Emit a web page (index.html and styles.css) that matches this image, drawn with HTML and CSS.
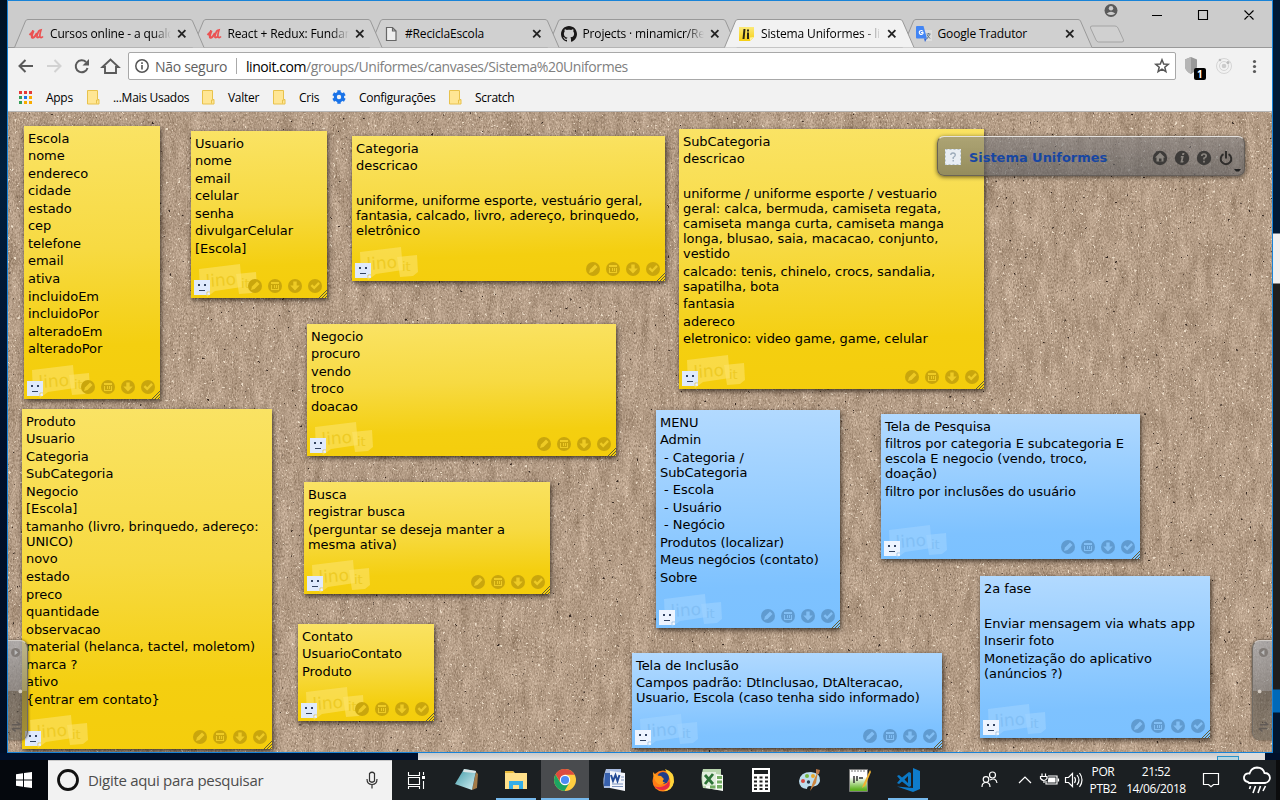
FILE: index.html
```html
<!DOCTYPE html>
<html lang="pt-BR">
<head>
<meta charset="utf-8">
<title>Sistema Uniformes - lino</title>
<link rel="stylesheet" href="styles.css">
</head>
<body>
<svg class="defs" width="0" height="0" aria-hidden="true">
  <defs>
    <symbol id="logo" viewBox="0 0 70 36">
      <path class="logo-paper" d="M8 7L49 2L51 25L24 29L16 35L14 30L9 30Z"/>
      <path class="logo-paper" d="M45 12L65 10L66 27L61 31L48 32Z"/>
      <text class="logo-word" x="15" y="25" transform="rotate(-4 15 25)">lino</text>
      <text class="logo-word logo-it" x="50" y="26">it</text>
      <rect class="face" x="3" y="18" width="16" height="15"/>
      <path class="face-fold" d="M16 33V30H19"/>
      <path class="face-line" d="M7 22h2v2h-2zM13 22h2v2h-2zM8 28h6v1h-6z"/>
    </symbol>
    <symbol id="tools" viewBox="0 0 81 24">
      <g class="tool-disc"><circle cx="9" cy="12" r="7"/><circle cx="29" cy="12" r="7"/><circle cx="49" cy="12" r="7"/><circle cx="69" cy="12" r="7"/></g>
      <g class="tool-mark">
        <path d="M5 16L6 12.500L11 7.500L13.500 10L8.500 15Z"/>
        <path d="M25 8h8v2h-8zM25 11h1v5h-1zM32 11h1v5h-1zM26 15h6v1h-6zM28 11h1v3h-1zM30 11h1v3h-1z"/>
        <path d="M47.300 7.500h3.400v4h3L49 16.500L44.300 11.500h3z"/>
        <path d="M64.500 12l1.700-1.700l2 2l4-4.200l1.700 1.700l-5.700 5.800z"/>
      </g>
      <path class="grip" d="M73 24L81 16M76 24L81 19M79 24L81 22"/>
    </symbol>
    <symbol id="tab" viewBox="0 0 192 29"><path d="M.5 28.500L11.500 2Q12.200.5 14 .5H176Q177.800.5 178.500 2L190 28.500"/></symbol>
    <symbol id="close" viewBox="0 0 10 10"><path d="M1.200 1.200L8.400 8.400M8.400 1.200L1.200 8.400" stroke="#222" stroke-width="1.800"/></symbol>
    <symbol id="udemy" viewBox="0 0 16 16"><path d="M1.500 9Q4 7 5.500 4.500Q3.500 9 4 11.300Q6 12.800 9 7" fill="none" stroke="#eb5252" stroke-width="2.200"/><path d="M11 4.500Q8.500 9.500 9 11.300Q10.200 12 11.500 10.500M11 4.500L13 4Q11.300 9.500 12.200 11.300Q13.500 12 15 10.500" fill="none" stroke="#eb5252" stroke-width="1.700"/></symbol>
    <symbol id="folder" viewBox="0 0 13 15"><path d="M.5.5h10v9h1.500v4.500h-11.500z" fill="#ffe694" stroke="#e8c24c"/><path d="M9.500 13.500v-3.500h2" fill="none" stroke="#e8c24c"/></symbol>
  </defs>
</svg>

<main class="screen">
  <div class="desk-row">
    <div class="edge edge-left"></div>
    <section class="window">
      <header class="titlebar">
        <div class="tabs">
          <div class="tab t1"><svg class="shape"><use href="#tab"/></svg><svg class="fav"><use href="#udemy"/></svg><span class="tab-text fade">Cursos online - a qualq</span><svg class="x"><use href="#close"/></svg></div>
          <div class="tab t2"><svg class="shape"><use href="#tab"/></svg><svg class="fav"><use href="#udemy"/></svg><span class="tab-text fade">React + Redux: Fundam</span><svg class="x"><use href="#close"/></svg></div>
          <div class="tab t3"><svg class="shape"><use href="#tab"/></svg><svg class="fav" viewBox="0 0 16 16"><path d="M3.500 1.500h6l3.500 3.500v9.500h-9.500zM9.500 1.500v3.500h3.500" fill="#eee" stroke="#666" stroke-width="1.200"/></svg><span class="tab-text">#ReciclaEscola</span><svg class="x"><use href="#close"/></svg></div>
          <div class="tab t4"><svg class="shape"><use href="#tab"/></svg><svg class="fav" viewBox="0 0 16 16"><path fill="#191717" d="M8 0C3.600 0 0 3.600 0 8c0 3.500 2.300 6.500 5.500 7.600.4.1.5-.2.5-.4v-1.400c-2.200.5-2.700-1-2.700-1-.4-.9-.9-1.200-.9-1.200-.7-.5.1-.5.1-.5.8.1 1.200.8 1.200.8.7 1.300 1.900.9 2.300.7.1-.5.300-.9.500-1.100-1.800-.2-3.600-.9-3.600-4 0-.9.300-1.600.8-2.100-.1-.2-.4-1 .1-2.100 0 0 .7-.2 2.200.8.6-.2 1.300-.3 2-.3s1.400.1 2 .3c1.500-1 2.200-.8 2.200-.8.4 1.100.2 1.900.1 2.100.5.600.8 1.300.8 2.100 0 3.100-1.900 3.700-3.700 3.900.3.400.6.900.6 1.700v2.200c0 .2.100.5.600.4C13.700 14.500 16 11.500 16 8c0-4.400-3.600-8-8-8z"/></svg><span class="tab-text fade">Projects · minamicr/Rec</span><svg class="x"><use href="#close"/></svg></div>
          <div class="tab t5 active"><svg class="shape"><use href="#tab"/></svg><svg class="fav" viewBox="0 0 16 16"><defs><linearGradient id="lg" x2="0" y2="1"><stop stop-color="#fbe978"/><stop offset="1" stop-color="#f6cf12"/></linearGradient></defs><path d="M1 1h15v10l-4 4h-11z" fill="url(#lg)"/><path d="M16 11l-4 4v-3.500z" fill="#fff3a0"/><path d="M6.500 3L5.500 13M10 6.500V13M10 3.500v2" stroke="#2b2814" stroke-width="2"/></svg><span class="tab-text fade">Sistema Uniformes - lino</span><svg class="x"><use href="#close"/></svg></div>
          <div class="tab t6"><svg class="shape"><use href="#tab"/></svg><svg class="fav" viewBox="0 0 16 16"><path d="M6 4h10v11h-6z" fill="#ddd"/><path d="M0 1Q0 0 1 0H7.500L11 12.500H1Q0 12.500 0 11.500Z" fill="#4285f4"/><path d="M8 12.500h3l-2 3.500z" fill="#3367d6"/><path d="M7 5.500A2 2 0 1 0 7 7.500V6.600H5" fill="none" stroke="#fff" stroke-width="1.100"/><path d="M10.500 8h4M12.500 7v1M13.800 8.500l-3 4.500M11 9l3 3.500" stroke="#667b88" fill="none"/></svg><span class="tab-text">Google Tradutor</span><svg class="x"><use href="#close"/></svg></div>
        </div>
        <svg class="newtab" viewBox="0 0 36 18"><path d="M3 1H26Q28 1 29 3L34.500 15Q35 17 33 17H9.500Q8 17 7 15L1.500 3Q1 1 3 1Z" fill="#d0d0d0" stroke="#a4a4a4"/></svg>
        <svg class="caption" viewBox="0 0 160 28">
          <circle cx="7" cy="8.500" r="6.500" fill="#5a5a5a"/><circle cx="7" cy="6.300" r="2.200" fill="#ccc"/><path d="M2.800 11.500Q7 8 11.200 11.500Q7 14.500 2.800 11.500" fill="#ccc"/>
          <path d="M48 13.500h10M94.500 8.500h9v9h-9zM140.500 8.500l9 9M149.500 8.500l-9 9" fill="none" stroke="#000" stroke-width="1.100"/>
        </svg>
      </header>

      <div class="navbar">
        <svg class="nav-icons" viewBox="0 0 112 24" fill="none" stroke="#5a5a5a" stroke-width="2">
          <path d="M13.500 6L7.500 12L13.500 18M8 12h13"/>
          <path d="M42.500 6L48.500 12L42.500 18M35 12h13" stroke="#d2d2d2"/>
          <path d="M74 8A6 6 0 1 0 75.500 14"/><path d="M77 5v6.500h-6.500z" fill="#5a5a5a" stroke="none"/>
          <path d="M90.500 13L98.500 5.500L106.500 13H104V19H93V13Z" stroke-width="1.900"/>
        </svg>
        <div class="omnibox">
          <svg class="info" viewBox="0 0 16 16"><circle cx="8" cy="8" r="6.200" fill="none" stroke="#555" stroke-width="1.500"/><path d="M8 7v4.500M8 4.300v1.700" stroke="#555" stroke-width="1.600"/></svg>
          <span class="secure">Não seguro</span><i class="bar"></i>
          <span class="url"><b>linoit.com</b>/groups/Uniformes/canvases/Sistema%20Uniformes</span>
          <svg class="star" viewBox="0 0 16 16"><path d="M8 1.800L9.700 6L14.200 6.300L10.800 9.200L11.900 13.600L8 11.200L4.100 13.600L5.200 9.200L1.800 6.300L6.300 6Z" fill="none" stroke="#555" stroke-width="1.500"/></svg>
        </div>
        <svg class="ext" viewBox="0 0 96 28">
          <path d="M15 5L21 7.500V15Q20 19 15 22Q9.500 19 9 15V7.500Z" fill="#999"/><path d="M15 5V22Q9.500 19 9 15V7.500Z" fill="#b5b5b5"/>
          <rect x="18" y="16" width="12" height="12" rx="2" fill="#000"/><text x="21" y="25.500" class="badge">1</text>
          <g fill="none" stroke="#d5d5d5"><circle cx="48" cy="14" r="7.500"/><circle cx="48" cy="14" r="4.500"/></g><circle cx="48" cy="14" r="2.300" fill="#ccc"/><circle cx="52" cy="10.500" r="1.500" fill="#bbb"/><circle cx="44" cy="8" r="1.300" fill="#bbb"/>
          <g fill="#5a5a5a"><circle cx="78.500" cy="9.500" r="1.600"/><circle cx="78.500" cy="14.500" r="1.600"/><circle cx="78.500" cy="19.500" r="1.600"/></g>
        </svg>
      </div>

      <nav class="bookmarks">
        <svg class="apps" viewBox="0 0 13 13"><path fill="#e53935" d="M0 0h3v3h-3zM5 0h3v3h-3zM10 0h3v3h-3z"/><path fill="#34a05a" d="M0 5h3v3h-3zM0 10h3v3h-3z"/><path fill="#1a73e8" d="M5 5h3v3h-3z"/><path fill="#f9ab00" d="M10 5h3v3h-3zM5 10h3v3h-3zM10 10h3v3h-3z"/></svg>
        <span class="bm b1">Apps</span>
        <svg class="folder"><use href="#folder"/></svg><span class="bm b2">...Mais Usados</span>
        <svg class="folder"><use href="#folder"/></svg><span class="bm b3">Valter</span>
        <svg class="folder"><use href="#folder"/></svg><span class="bm b4">Cris</span>
        <svg class="gear" viewBox="0 0 14 14"><circle cx="7" cy="7" r="3.700" fill="none" stroke="#1a73e8" stroke-width="3"/><path d="M7 .3v2.700M7 11v2.700M1.200 3.700l2.300 1.300M10.500 9l2.300 1.300M1.200 10.300l2.300-1.300M10.500 5l2.300-1.300" stroke="#1a73e8" stroke-width="3.400"/></svg><span class="bm b5">Configurações</span>
        <svg class="folder"><use href="#folder"/></svg><span class="bm b6">Scratch</span>
      </nav>

      <div class="canvas">
        <svg class="board" width="1264" height="640">
          <filter id="fiber" x="0" y="0" width="100%" height="100%" color-interpolation-filters="sRGB">
            <feTurbulence type="fractalNoise" baseFrequency=".713 .417" numOctaves="2" seed="7" result="fine"/>
            <feTurbulence type="fractalNoise" baseFrequency=".117 .031" numOctaves="3" seed="12" result="broad"/>
            <feComposite in="fine" in2="broad" operator="arithmetic" k2=".68" k3=".32"/>
            <feColorMatrix values=".44 .3 0 0 .335  .44 .3 0 0 .243  .44 .3 0 0 .155  0 0 0 0 1"/>
          </filter>
          <filter id="light" x="0" y="0" width="100%" height="100%" color-interpolation-filters="sRGB">
            <feTurbulence type="fractalNoise" baseFrequency=".317" numOctaves="3" seed="21"/>
            <feColorMatrix values="0 0 0 0 .93  0 0 0 0 .87  0 0 0 0 .79  10 0 0 0 -7"/>
          </filter>
          <filter id="dark" x="0" y="0" width="100%" height="100%" color-interpolation-filters="sRGB">
            <feTurbulence type="fractalNoise" baseFrequency=".237" numOctaves="3" seed="44"/>
            <feColorMatrix values="0 0 0 0 .2  0 0 0 0 .15  0 0 0 0 .12  0 12 0 0 -9.400"/>
          </filter>
          <rect width="1264" height="640" filter="url(#fiber)"/>
          <rect width="1264" height="640" filter="url(#light)"/>
          <rect width="1264" height="640" filter="url(#dark)"/>
        </svg>

        <article class="note escola"><p>Escola</p><p>nome</p><p>endereco</p><p>cidade</p><p>estado</p><p>cep</p><p>telefone</p><p>email</p><p>ativa</p><p>incluidoEm</p><p>incluidoPor</p><p>alteradoEm</p><p>alteradoPor</p><footer><svg class="logo"><use href="#logo"/></svg><svg class="tools"><use href="#tools"/></svg></footer></article>
        <article class="note usuario"><p>Usuario</p><p>nome</p><p>email</p><p>celular</p><p>senha</p><p>divulgarCelular</p><p>[Escola]</p><footer><svg class="logo"><use href="#logo"/></svg><svg class="tools"><use href="#tools"/></svg></footer></article>
        <article class="note categoria"><p>Categoria</p><p>descricao</p><p>&nbsp;</p><p>uniforme, uniforme esporte, vestuário geral,<br>fantasia, calcado, livro, adereço, brinquedo,<br>eletrônico</p><footer><svg class="logo"><use href="#logo"/></svg><svg class="tools"><use href="#tools"/></svg></footer></article>
        <article class="note subcategoria"><p>SubCategoria</p><p>descricao</p><p>&nbsp;</p><p>uniforme / uniforme esporte / vestuario<br>geral: calca, bermuda, camiseta regata,<br>camiseta manga curta, camiseta manga<br>longa, blusao, saia, macacao, conjunto,<br>vestido</p><p>calcado: tenis, chinelo, crocs, sandalia,<br>sapatilha, bota</p><p>fantasia</p><p>adereco</p><p>eletronico: video game, game, celular</p><footer><svg class="logo"><use href="#logo"/></svg><svg class="tools"><use href="#tools"/></svg></footer></article>
        <article class="note negocio"><p>Negocio</p><p>procuro</p><p>vendo</p><p>troco</p><p>doacao</p><footer><svg class="logo"><use href="#logo"/></svg><svg class="tools"><use href="#tools"/></svg></footer></article>
        <article class="note produto"><p>Produto</p><p>Usuario</p><p>Categoria</p><p>SubCategoria</p><p>Negocio</p><p>[Escola]</p><p>tamanho (livro, brinquedo, adereço:<br>UNICO)</p><p>novo</p><p>estado</p><p>preco</p><p>quantidade</p><p>observacao</p><p>material (helanca, tactel, moletom)</p><p>marca ?</p><p>ativo</p><p>{entrar em contato}</p><footer><svg class="logo"><use href="#logo"/></svg><svg class="tools"><use href="#tools"/></svg></footer></article>
        <article class="note busca"><p>Busca</p><p>registrar busca</p><p>(perguntar se deseja manter a<br>mesma ativa)</p><footer><svg class="logo"><use href="#logo"/></svg><svg class="tools"><use href="#tools"/></svg></footer></article>
        <article class="note contato"><p>Contato</p><p>UsuarioContato</p><p>Produto</p><footer><svg class="logo"><use href="#logo"/></svg><svg class="tools"><use href="#tools"/></svg></footer></article>
        <article class="note blue menu"><p>MENU</p><p>Admin</p><p>&nbsp;- Categoria /<br>SubCategoria</p><p>&nbsp;- Escola</p><p>&nbsp;- Usuário</p><p>&nbsp;- Negócio</p><p>Produtos (localizar)</p><p>Meus negócios (contato)</p><p>Sobre</p><footer><svg class="logo"><use href="#logo"/></svg><svg class="tools"><use href="#tools"/></svg></footer></article>
        <article class="note blue pesquisa"><p>Tela de Pesquisa</p><p>filtros por categoria E subcategoria E<br>escola E negocio (vendo, troco,<br>doação)</p><p>filtro por inclusões do usuário</p><footer><svg class="logo"><use href="#logo"/></svg><svg class="tools"><use href="#tools"/></svg></footer></article>
        <article class="note blue fase"><p>2a fase</p><p>&nbsp;</p><p>Enviar mensagem via whats app</p><p>Inserir foto</p><p>Monetização do aplicativo<br>(anúncios ?)</p><footer><svg class="logo"><use href="#logo"/></svg><svg class="tools"><use href="#tools"/></svg></footer></article>
        <article class="note blue inclusao"><p>Tela de Inclusão</p><p>Campos padrão: DtInclusao, DtAlteracao,<br>Usuario, Escola (caso tenha sido informado)</p><footer><svg class="logo"><use href="#logo"/></svg><svg class="tools"><use href="#tools"/></svg></footer></article>

        <div class="panel">
          <svg class="panel-fav" viewBox="0 0 16 16"><rect width="16" height="16" fill="#e8edf2"/><rect x=".5" y=".5" width="15" height="15" fill="none" stroke="#b9c4cd" stroke-dasharray="2 2"/><path d="M5.800 6Q5.800 4 8 4T10.300 6Q10.300 7.300 8.200 8.500V10M8.200 11v1.500" fill="none" stroke="#9aa9b8" stroke-width="1.300"/></svg>
          <strong>Sistema Uniformes</strong>
          <svg class="panel-icons" viewBox="0 0 86 24">
            <g fill="#3d3b39"><circle cx="8" cy="12" r="7.200"/><circle cx="30" cy="12" r="7.200"/><circle cx="52" cy="12" r="7.200"/></g>
            <g fill="#8a857f"><path d="M8 6.500L13 11.500H11.500V15.500H4.500V11.500H3Z"/><path d="M7 12.500h2.500v3h-2.500z" fill="#3d3b39"/><path d="M30.500 7h2l-.5 2h-2zM29 10h2.800l-1.200 5h1l-.4 1.500h-2.800l1.200-5h-1z"/></g>
            <path d="M49.800 10Q49.800 8 52 8T54.200 10Q54.200 11 52 12.300V13.500M52 14.700v1.800" fill="none" stroke="#8a857f" stroke-width="1.700"/>
            <path d="M71.500 8.200A5.300 5.300 0 1 0 76.500 8.200M74 5v7.500" fill="none" stroke="#2f2d2b" stroke-width="2"/>
          </svg>
        </div>
        <svg class="caret" viewBox="0 0 7 4"><path d="M0 0h7L5 2.500H2z" fill="#222"/></svg>
        <svg class="drawer drawer-left" viewBox="0 0 20 100"><circle cx="8" cy="10" r="4.800" fill="#817b77"/><path d="M7 7l3.500 3-3.500 3z" fill="#bbb"/><circle cx="13" cy="51" r="2" fill="#d3cbc2"/><path d="M4 86h8M9 83l4 3M13 90h-8M8 93l-4-3" stroke="#625b56" stroke-width="1.500"/></svg>
        <svg class="drawer drawer-right" viewBox="0 0 20 100"><circle cx="11" cy="10" r="4.800" fill="#817b77"/><path d="M12 7l-3.500 3 3.500 3z" fill="#bbb"/><circle cx="7" cy="51" r="2" fill="#d3cbc2"/><path d="M7 86h8M12 83l4 3M15 90h-8M10 93l-4-3" stroke="#625b56" stroke-width="1.500"/></svg>
      </div>
    </section>
    <div class="edge edge-right"></div>
  </div>
  <div class="strip"><i class="strip-light"></i><i class="strip-box"></i><i class="strip-end"></i></div>

  <footer class="taskbar">
    <div class="start"><svg width="16" height="16" viewBox="0 0 16 16"><path fill="#fff" d="M0 2.200L7 1.200V7.500H0zM8 1L16 0V7.500H8zM0 8.500H7V14.800L0 13.800zM8 8.500H16V16L8 15z"/></svg></div>
    <div class="search"><svg width="24" height="24" viewBox="0 0 24 24"><circle cx="12" cy="12" r="9.500" fill="none" stroke="#111" stroke-width="2.800"/></svg><span>Digite aqui para pesquisar</span>
      <svg class="mic" width="14" height="18" viewBox="0 0 14 18"><path d="M4.500 2.500Q7 0 9.500 2.500V10Q7 12.500 4.500 10ZM2 8Q2 13.500 7 13.500T12 8M7 13.500V17.500" fill="none" stroke="#333" stroke-width="1.200"/></svg></div>
    <div class="task tv"><svg viewBox="0 0 24 24"><path d="M4.500 4v3.500h11V4M4.500 9.500h11v7h-11zM4.500 21v-2.500h11V21M19.500 4v3M19.500 13v8" fill="none" stroke="#fff" stroke-width="1.100"/><path d="M18 8h3v3h-3z" fill="#fff"/></svg></div>
    <div class="task notes"><svg viewBox="0 0 24 24"><defs><linearGradient id="ng" x2="1" y2="1"><stop stop-color="#3f9aa7"/><stop offset="1" stop-color="#d8f2f6"/></linearGradient></defs><path d="M21 4l2 2-1 14-5 2z" fill="#a37a47"/><path d="M9 1L21 3L17 22L0 16Z" fill="url(#ng)"/><path d="M9 1L21 3L20.500 5L8 4Z" fill="#dce5e6"/></svg></div>
    <div class="task explorer open"><svg viewBox="0 0 24 24"><path d="M1 3h8l2 2h12v16h-22z" fill="#ffe08a"/><path d="M1 3h8l1 2h-9z" fill="#e8b93a"/><path d="M5 21v-8h14v8h-4v-4h-6v4z" fill="#35aee8"/></svg></div>
    <div class="task chrome open"><svg viewBox="0 0 24 24"><circle cx="12" cy="12" r="11" fill="#ffcd40"/><path d="M2.500 6.500A11 11 0 0 1 21.600 6.800H12L7.500 14.500Z" fill="#dd4b3e"/><path d="M2.500 6.500A11 11 0 0 0 11.500 23L16.500 14.500H7.200Z" fill="#1da462"/><circle cx="12" cy="12" r="5.200" fill="#fff"/><circle cx="12" cy="12" r="4.100" fill="#4c8bf5"/></svg></div>
    <div class="task word"><svg viewBox="0 0 24 24"><path d="M4 1h15v19h-17q-2-9 2-19z" fill="#a9bce2"/><path d="M3 5h14v13h-15z" fill="#3760ad"/><path d="M8 3L23 5V23L8 20Z" fill="#f4f6fb"/><path d="M9 7l2 6 2.500-6 2 6L17.500 7" fill="none" stroke="#234b96" stroke-width="2"/><path d="M10 16h11M10 18.500h11M19 9h3M19 12h3" stroke="#7c93bf"/></svg></div>
    <div class="task firefox"><svg viewBox="0 0 24 24"><circle cx="12" cy="13" r="10.500" fill="#ff7b15"/><path d="M14 1Q24 4 23 14Q21 23 13 23Q21 18 19 11Z" fill="#ffd43a"/><path d="M3 18Q9 24 16 21Q20 18 18 13Q12 22 3 18" fill="#e72a45"/><circle cx="12" cy="10" r="6" fill="#203d89"/><path d="M2 4Q5 8 10 8L13 11Q10 14 14 14.500Q9 19 5 14Q2 10 2 4" fill="#ff9b1d"/></svg></div>
    <div class="task excel"><svg viewBox="0 0 24 24"><path d="M3 1h18v21L3 20Q0 10 3 1z" fill="#b8d5ad"/><path d="M7 5L23 7V23L6 20Z" fill="#f7fbf4"/><path d="M2 4h14v14h-13z" fill="#e1eedd"/><path d="M5 7L13 16M13 6L5 16" stroke="#2c7336" stroke-width="2.800"/><path d="M17 8h5v3h-5zM17 12.500h5v3h-5zM17 17h5v3.500h-5zM10 17.500h5.500v3h-5.500z" fill="#72ac61"/></svg></div>
    <div class="task calc"><svg viewBox="0 0 24 24"><path d="M3 0h18v24h-18z" fill="#fff"/><path d="M5 2h14v4h-14z" fill="#1c1f21"/><path d="M5 9.500h14M5 13.500h14M5 17.500h14M5 21h14" stroke="#222" stroke-width="2" stroke-dasharray="3 2.500"/></svg></div>
    <div class="task paint"><svg viewBox="0 0 24 24"><path d="M1 13Q2 4 13 4Q23 5 22 13Q20 20 12 18Q9 18 9 21Q1 20 1 13" fill="#bddced"/><circle cx="5" cy="13" r="2" fill="#d84a40"/><circle cx="9" cy="8" r="2" fill="#76b640"/><circle cx="15" cy="8" r="2" fill="#e9a92c"/><circle cx="10.500" cy="14" r="1.700" fill="#263b4e"/><path d="M20 3L15 14L12 23L18 15Z" fill="#cd853f"/><path d="M18 1l4 1-1 4-3 0z" fill="#b97647"/></svg></div>
    <div class="task npp"><svg viewBox="0 0 24 24"><defs><linearGradient id="pg" x2="0" y2="1"><stop offset=".35" stop-color="#fff"/><stop offset=".9" stop-color="#62b424"/></linearGradient></defs><path d="M2.500 1.500h18v22h-18z" fill="url(#pg)" stroke="#7a7a7a"/><path d="M4 3h15" stroke="#777" stroke-dasharray="2 1"/><path d="M7 8v7M10 8v5M12 10h4" stroke="#333" stroke-width="1.500"/><path d="M23 2L16 17L15 20L18 18L24 4Z" fill="#efb232"/></svg></div>
    <div class="task code open"><svg viewBox="0 0 24 24"><path d="M17 0L24 3V21L17 24L1 18.500L17 20Z" fill="#0e7ccb"/><path d="M1 8L3 7L6 9.500L13 4L15 5V18L13 19L6 13.500L3 16L1 15L4 11.500ZM12 8L8.500 11.500L12 15Z" fill="#0b78c6" fill-rule="evenodd"/></svg></div>
    <div class="tray">
      <svg viewBox="0 0 108 40" class="tray-icons"><g fill="none" stroke="#fff" stroke-width="1.200"><circle cx="17.500" cy="15" r="3"/><circle cx="11" cy="19.500" r="2.800"/><path d="M7 27q0-4.500 4-4.500t4 4.500M15 20q6-3 7 3M44 23l6-6L56 23"/><path d="M73 16h9v8h-11v-3M83.500 18.500v3M67 16.500v-3M70.500 16.500v-3M65.500 16.500h6.500v2q-3 4-6.500 0zM69 21v2"/><path d="M90.500 17.500h3l4-4v13l-4-4h-3z"/><path d="M99.500 17q2 3 0 6M102 15q4 5 0 10M104.500 13q5 7 0 14"/></g><path d="M73.500 17.500h7v5h-8z" fill="#fff"/></svg>
      <div class="lang">POR<br>PTB2</div><div class="clock">21:52<br>14/06/2018</div>
      <svg class="action" viewBox="0 0 18 18"><path d="M1.500 2.500h15v11h-5l-2.500 2.300-2.500-2.300h-5z" fill="none" stroke="#fff" stroke-width="1.200"/></svg>
      <svg class="rain" viewBox="0 0 30 30"><path d="M6 17Q1.500 16 2 12Q3 8 7.500 8.500Q9 3 15 2.500Q21 2.500 22.500 8Q27.500 8 28 13Q27.500 17 23 18H7Z" fill="none" stroke="#fff" stroke-width="1.800"/><path d="M8.500 21l-1 3M13.500 21l-2.500 7M18.500 21l-2.500 7M23.500 21l-2.500 5" stroke="#fff" stroke-width="1.600"/></svg>
    </div>
  </footer>
</main>
</body>
</html>
```
FILE: styles.css
```css
* { box-sizing: border-box; }
body { margin: 0; overflow: hidden; font-family: "Open Sans", "Noto Sans", sans-serif; font-size: 12px; color: #000; }
svg { display: block; flex: none; overflow: visible; }
.defs { position: absolute; }
.screen { width: 1280px; height: 800px; background: #00152b; display: flex; flex-direction: column; }
.desk-row { display: flex; height: 753px; }
.edge { width: 7px; flex: none; }
.edge-left { background: linear-gradient(#001122, #001f3d 22%, #00102a 60%, #000e24); }
.edge-right { background: linear-gradient(#001a36 0 233px, #f0f0f0 234px 283px, #1e1e1e 284px 689px, #0069b8 690px 712px, #00152f 713px); }
.window { width: 1266px; border: 1px solid #1883d7; display: flex; flex-direction: column; background: #f2f2f2; }

/* Tab strip */
.titlebar { height: 47px; background: #ccc; display: flex; align-items: flex-end; border-bottom: 1px solid #999; flex: none; }
.tabs { display: flex; margin-left: 6px; margin-bottom: -1px; }
.tab { width: 192px; height: 29px; margin-right: -14.500px; display: flex; align-items: center; position: relative; padding-left: 14px; isolation: isolate; }
.t1 { z-index: 6; } .t2 { z-index: 5; } .t3 { z-index: 4; } .t4 { z-index: 3; } .t6 { z-index: 1; }
.shape { position: absolute; left: 0; top: 0; width: 192px; height: 29px; fill: #d0d0d0; stroke: #999; z-index: -1; }
.active { z-index: 8; }
.active .shape { fill: #f2f2f2; }
.fav { width: 16px; height: 16px; }
.tab-text { width: 123px; margin-left: 6px; overflow: hidden; white-space: nowrap; font-size: 12px; letter-spacing: -.15px; line-height: 18px; }
.active .tab-text { padding-left: 1px; }
.fade { -webkit-mask-image: linear-gradient(90deg, #000 103px, transparent 121px); mask-image: linear-gradient(90deg, #000 103px, transparent 121px); }
.x { width: 10px; height: 10px; margin-left: 4px; }
.newtab { width: 36px; height: 18px; margin: 0 0 4px 10px; }
.caption { width: 160px; height: 28px; margin: 0 0 17px -21px; }

/* Address row */
.navbar { display: flex; align-items: flex-start; height: 37px; padding: 4px 0 0 8px; flex: none; }
.nav-icons { width: 112px; height: 24px; margin: 2px 0 0 -4px; }
.omnibox { display: flex; align-items: center; width: 1048px; height: 28px; border: 1px solid #a8a8a8; border-radius: 2px; background: #fff; margin-left: 4px; padding: 0 5px; font-size: 14px; }
.info { width: 16px; height: 16px; }
.secure { width: 73px; color: #5f5f5f; margin-left: 5px; white-space: nowrap; letter-spacing: -.3px; }
.bar { width: 1px; height: 16px; background: #aaa; margin: 0 9px 0 8px; }
.url { flex: 1; color: #808080; white-space: nowrap; letter-spacing: -.43px; }
.url b { color: #000; font-weight: 400; }
.star { width: 16px; height: 16px; }
.ext { width: 96px; height: 28px; }
.badge { fill: #fff; font-size: 10px; font-weight: 700; }

/* Bookmarks */
.bookmarks { height: 27px; display: flex; align-items: center; padding: 0 0 2px 11px; border-bottom: 1px solid #b5b5b5; flex: none; }
.apps { width: 13px; height: 13px; margin-right: 14px; }
.folder { width: 13px; height: 15px; }
.gear { width: 14px; height: 14px; }
.bm { white-space: nowrap; letter-spacing: -.28px; }
.b1 { width: 41px; } .b2 { width: 89px; margin-left: 13px; } .b3 { width: 45px; margin-left: 13px; }
.b4 { width: 33px; margin-left: 13px; } .b5 { width: 90px; margin-left: 13px; } .b6 { margin-left: 13px; }

/* Board */
.canvas { position: relative; width: 1264px; height: 640px; overflow: hidden; background: #b39b85; font: 13px/15px "DejaVu Sans", sans-serif; }
.board { position: absolute; left: 0; top: 0; }
.note { position: absolute; padding: 4.600px 4px; white-space: nowrap; letter-spacing: -.06px; background: linear-gradient(178deg, #fae365, #f7da42 45%, #f4cf10 80%, #f4cd0c); box-shadow: 1px 2px 5px rgba(20, 12, 5, .75); --paper: #fbe36a; --mark: #eecb25; --disc: #c9a60d; --face: #dfeafd; }
.blue { background: linear-gradient(178deg, #b3daff, #94ccff 48%, #7ec2ff 80%, #7bc1ff); --paper: #9fd2ff; --mark: #82bff5; --disc: #609bd0; --face: #edf4ff; }
.note p { margin: 0 0 2.550px; }
.note footer { position: absolute; left: 0; right: 0; bottom: 0; display: flex; align-items: flex-end; justify-content: space-between; }
.logo { width: 70px; height: 36px; margin-right: -30px; }
.tools { width: 81px; height: 24px; }
.logo-paper { fill: var(--paper); opacity: .6; }
.logo-word { fill: var(--mark); font: 17px "DejaVu Sans", sans-serif; }
.logo-it { font-size: 13px; }
.face { fill: var(--face); }
.face-fold { fill: #fff; stroke: var(--disc); stroke-width: .5; }
.face-line { fill: #344563; }
.tool-disc { fill: var(--disc); }
.tool-mark { fill: var(--mark); }
.grip { stroke: #665f35; stroke-width: 1; }
.escola { left: 16px; top: 14px; width: 136px; height: 273px; }
.usuario { left: 183px; top: 19px; width: 136px; height: 167px; }
.categoria { left: 344px; top: 24px; width: 313px; height: 145px; }
.subcategoria { left: 671px; top: 17px; width: 305px; height: 260px; }
.negocio { left: 299px; top: 212px; width: 309px; height: 132px; }
.produto { left: 14px; top: 297px; width: 250px; height: 340px; }
.busca { left: 296px; top: 370px; width: 246px; height: 112px; }
.contato { left: 290px; top: 512px; width: 136px; height: 97px; }
.menu { left: 648px; top: 298px; width: 184px; height: 218px; }
.pesquisa { left: 873px; top: 302px; width: 259px; height: 145px; }
.fase { left: 972px; top: 464px; width: 230px; height: 162px; }
.inclusao { left: 624px; top: 541px; width: 310px; height: 95px; }
.panel { position: absolute; left: 929px; top: 24px; width: 308px; height: 40px; border-radius: 7px; border: 1px solid rgba(90, 85, 80, .8); border-top: 1px solid #e5e2df; background: linear-gradient(rgba(125, 125, 128, .62), rgba(92, 94, 98, .64)); box-shadow: 0 1px 4px rgba(20, 15, 10, .65); display: flex; align-items: center; padding-left: 7px; }
.panel-fav { width: 16px; height: 16px; margin-top: 2px; }
.panel strong { color: #1746a2; margin: 2px 0 0 8px; width: 183px; white-space: nowrap; font-size: 13px; letter-spacing: -.04px; }
.panel-icons { width: 86px; height: 24px; margin-top: 3px; }
.caret { position: absolute; left: 1226px; top: 57px; width: 7px; height: 4px; }
.drawer { position: absolute; top: 528px; width: 20px; height: 100px; background: linear-gradient(rgba(170, 172, 177, .75), rgba(130, 130, 132, .7) 50%, rgba(90, 86, 80, .65) 51%, rgba(100, 95, 85, .55)); border-top: 1px solid #d0cbc6; box-shadow: 0 0 3px rgba(40, 30, 20, .8); }
.drawer-left { left: 0; border-radius: 0 8px 8px 0; border-right: 1px solid #706b64; }
.drawer-right { right: 0; border-radius: 8px 0 0 8px; border-left: 1px solid #706b64; }

/* Desktop sliver and taskbar */
.strip { height: 7px; display: flex; padding-left: 418px; background: #00102b; }
.strip-light { width: 799px; background: linear-gradient(#c8c8c8, #e3e3e3); }
.strip-box { width: 22px; background: #b7d5e0; border: 1px solid #2a93c9; border-bottom: 0; margin-top: 3px; box-shadow: 0 -3px #d0d0d0; }
.strip-end { width: 26px; background: #ddd; }
.taskbar { height: 40px; background: #1b1f22; display: flex; color: #fff; }
.start { width: 48px; background: #05080d; display: flex; align-items: center; justify-content: center; }
.search { width: 344px; background: #f2f2f2; border-top: 1px solid #c9c9c9; display: flex; align-items: center; padding: 0 13px 2px 8px; color: #4c4c4c; font-size: 15px; letter-spacing: -.3px; }
.search span { flex: 1; margin-left: 8px; white-space: nowrap; }
.task { width: 48px; height: 40px; margin-right: 1px; display: flex; align-items: center; justify-content: center; flex: none; }
.task svg { width: 24px; height: 24px; }
.open { box-shadow: inset 0 -2px #76b9ed; }
.notes { margin-left: 2px; }
.explorer { width: 40px; margin: 0 5px 0 4px; }
.code { width: 40px; margin: 0 5px 0 4px; }
.chrome { background: #494b4e; }
.tray { margin-left: auto; display: flex; align-items: center; flex: none; width: 305px; font-size: 12px; line-height: 17.500px; text-align: center; letter-spacing: -.4px; border-right: 4px solid #0b0c0d; }
.tray-icons { width: 108px; height: 40px; }
.lang { width: 40px; } .clock { width: 64px; margin-left: 1px; white-space: nowrap; }
.action { width: 18px; height: 18px; margin-left: 14px; }
.rain { width: 30px; height: 30px; margin-left: 22px; }
```
